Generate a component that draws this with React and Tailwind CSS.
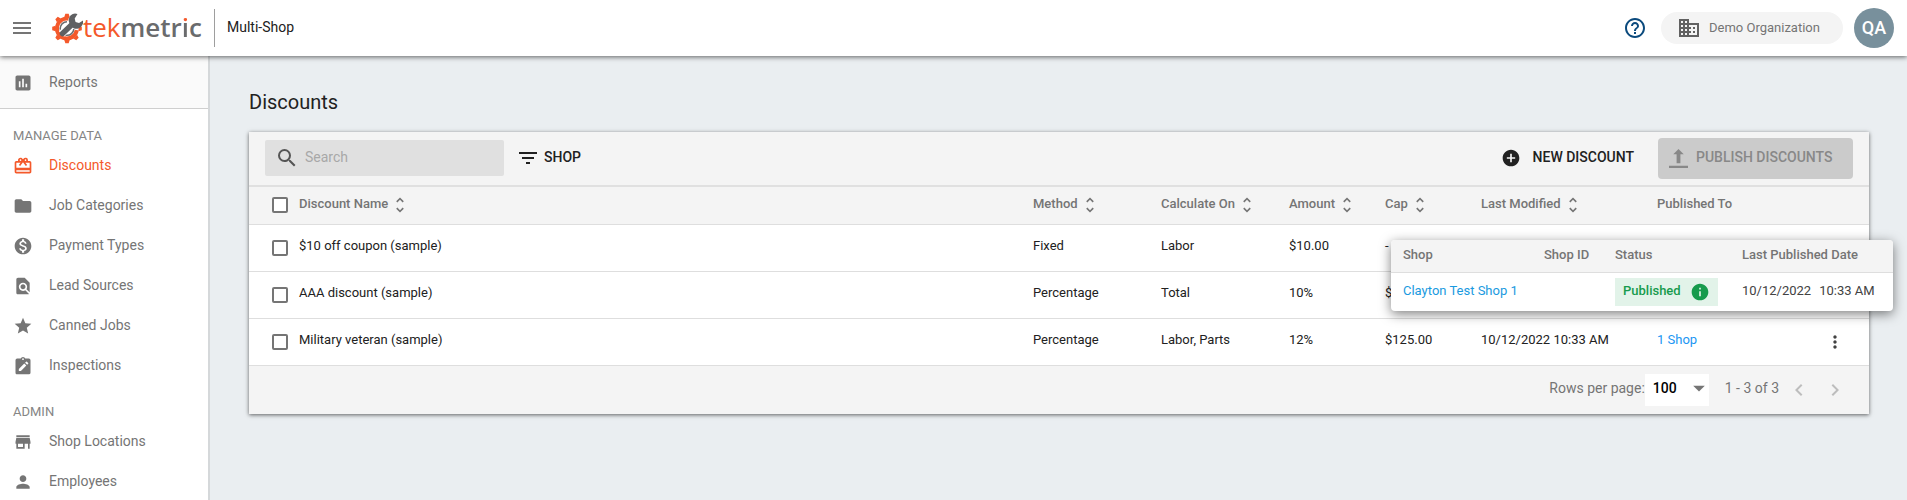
import React, { useState } from 'react';
import {
  MdMenu, MdHelpOutline, MdBusiness, MdAssessment, MdFolder, MdMonetizationOn, MdFindInPage, MdStar,
  MdStore, MdPerson, MdSearch, MdFilterList, MdAddCircle, MdInfo, MdMoreVert, MdChevronLeft,
  MdChevronRight, MdUnfoldMore, MdArrowDropDown, MdOutlineCardGiftcard,
} from 'react-icons/md';

const InspectionIcon = ({ className }) => (
  <svg viewBox="0 0 24 24" fill="currentColor" className={className}>
    <path
      fillRule="evenodd"
      d="M19 3h-4.2a3 3 0 0 0-5.6 0H5a2 2 0 0 0-2 2v15c0 1.100.9 2 2 2h14a2 2 0 0 0 2-2V5a2 2 0 0 0-2-2zm-7-.2a1 1 0 1 1 0 2 1 1 0 0 1 0-2zM7 18v-2.500l6.500-6.500 2.500 2.500L9.500 18zm10-7.500L14.500 8l1.200-1.200a.7.7 0 0 1 1 0l1.500 1.500a.7.7 0 0 1 0 1z"
    />
  </svg>
);

const UploadIcon = ({ className }) => (
  <svg viewBox="0 0 20 20" fill="currentColor" className={className}>
    <path d="M10 0l5.500 5.500H12V15H8V5.500H4.500zM0 17.500h20V20H0z" />
  </svg>
);

const LogoMark = () => (
  <svg viewBox="0 0 31 31" className="h-[31px] w-[31px]">
    <g fill="#f4592b">
      {[90, 135, 180, 225, 270, 315, 0].map((angle) => (
        <path key={angle} d="M12.300 4l1-3.300h3.400l1 3.300z" transform={`rotate(${angle} 15 15.500)`} />
      ))}
    </g>
    <path d="M17.500 5.800A10 10 0 1 0 24.800 17.200" fill="none" stroke="#f4592b" strokeWidth="4" />
    <path d="M15 8.700A6.800 6.800 0 1 0 21.800 16" fill="none" stroke="#6a6b6d" strokeWidth="1.500" />
    <path d="M9.500 21L21 10" stroke="#fff" strokeWidth="7.500" />
    <circle cx="23" cy="8.500" r="7" fill="#fff" />
    <path d="M10.500 20.500L21 10.500" stroke="#5f6062" strokeWidth="5.500" strokeLinecap="round" />
    <path
      d="M25.500 1a6.500 6.500 0 0 0-8.500 8l1.500 4 3.500 2.500a7 7 0 0 0 9-8l-4 2.500-3.500-1-.8-3.500z"
      fill="#5f6062"
    />
  </svg>
);

const manageItems = [
  { label: 'Discounts', Icon: MdOutlineCardGiftcard, active: true },
  { label: 'Job Categories', Icon: MdFolder },
  { label: 'Payment Types', Icon: MdMonetizationOn },
  { label: 'Lead Sources', Icon: MdFindInPage },
  { label: 'Canned Jobs', Icon: MdStar },
  { label: 'Inspections', Icon: InspectionIcon },
];

const adminItems = [
  { label: 'Shop Locations', Icon: MdStore },
  { label: 'Employees', Icon: MdPerson },
];

const discounts = [
  { id: 1, name: '$10 off coupon (sample)', method: 'Fixed', calculateOn: 'Labor', amount: '$10.00', cap: '-' },
  { id: 2, name: 'AAA discount (sample)', method: 'Percentage', calculateOn: 'Total', amount: '10%', cap: '$' },
  { id: 3, name: 'Military veteran (sample)', method: 'Percentage', calculateOn: 'Labor, Parts', amount: '12%', cap: '$125.00', modified: '10/12/2022 10:33 AM', shops: '1 Shop' },
];

const checkboxClass = 'block h-4 w-4 appearance-none rounded-xs border-2 border-[#757575] bg-white checked:bg-[#757575]';

const NavItem = ({ label, Icon, active }) => (
  <a href="#" className={`flex h-10 items-center gap-4 pl-[13px] ${active ? 'text-[#f4592b]' : 'text-[#757575]'}`}>
    <Icon className="h-5 w-5" />
    <span className="pb-0.5 text-sm">{label}</span>
  </a>
);

const SortHeader = ({ children }) => (
  <th className="p-0 text-left font-medium">
    <button className="flex items-center gap-0.5 font-medium">
      <span className="pb-1">{children}</span>
      <MdUnfoldMore className="h-5 w-5" />
    </button>
  </th>
);

const Cell = ({ children }) => <td className="p-0 pb-1">{children}</td>;

const PublishedPopup = () => (
  <div className="absolute top-[108px] -right-6 w-[502px] overflow-hidden rounded bg-white shadow-[0_3px_12px_rgba(0,0,0,0.5)]">
    <table className="w-full table-fixed text-left text-[13px]">
      <colgroup>
        <col className="w-[153px]" />
        <col className="w-[71px]" />
        <col className="w-[127px]" />
        <col />
      </colgroup>
      <thead>
        <tr className="h-8 border-b border-[#dedede] bg-[#f4f4f4] text-[#757575]">
          <th className="p-0 pb-0.5 pl-3 font-medium">Shop</th>
          <th className="p-0 pb-0.5 font-medium">Shop ID</th>
          <th className="p-0 pb-0.5 font-medium">Status</th>
          <th className="p-0 pb-0.5 font-medium">Last Published Date</th>
        </tr>
      </thead>
      <tbody>
        <tr className="h-[39px] text-[#424242]">
          <td className="p-0 pb-0.5 pl-3"><a href="#" className="text-[#1a9ae0]">Clayton Test Shop 1</a></td>
          <td></td>
          <td className="p-0">
            <span className="flex h-7 w-[103px] items-center justify-between bg-[#e2f3e9] px-2 font-medium text-[#179b4d]">
              <span className="pb-0.5">Published</span>
              <MdInfo className="h-5 w-5" />
            </span>
          </td>
          <td className="p-0 pb-0.5"><span className="mr-2">10/12/2022</span>10:33 AM</td>
        </tr>
      </tbody>
    </table>
  </div>
);

const App = () => {
  const [search, setSearch] = useState('');

  return (
    <div className="flex h-screen flex-col overflow-hidden bg-[#eaeef1] font-[Roboto,sans-serif] text-[#212121]">
      <header className="relative z-10 flex h-14 shrink-0 items-center bg-white pr-[13px] pl-[10px] shadow-[0_1px_5px_rgba(0,0,0,0.6)]">
        <button aria-label="Menu" className="text-[#757575]"><MdMenu className="h-6 w-6" /></button>
        <a href="#" className="ml-[18px] flex items-center">
          <LogoMark />
          <span className="pb-0.5 text-[26px] leading-8 font-[Open_Sans,sans-serif] text-[#f4592b]">
            tek
            <span className="font-semibold text-[#6a6b6d]">
              metr
              <span className="bg-linear-to-b from-[#f4592b] from-36% to-[#6a6b6d] to-36% bg-clip-text text-transparent">i</span>
              c
            </span>
          </span>
        </a>
        <div className="ml-3 flex h-[38px] items-center border-l border-[#9e9e9e] pb-0.5 pl-3 text-sm">Multi-Shop</div>
        <div className="ml-auto flex items-center">
          <button aria-label="Help" className="text-[#0b4a7d]"><MdHelpOutline className="h-6 w-6" /></button>
          <button className="ml-[14px] flex h-8 w-[182px] items-center gap-2 rounded-full bg-[#f4f4f4] pl-4 text-[13px] text-[#757575]">
            <MdBusiness className="h-6 w-6 text-[#616161]" />
            Demo Organization
          </button>
          <button className="ml-[11px] h-10 w-10 rounded-full bg-[#78909c] text-lg font-medium text-white">QA</button>
        </div>
      </header>

      <div className="flex min-h-0 flex-1">
        <nav className="w-[210px] shrink-0 border-r-2 border-[#d5d8da] bg-white">
          <div className="border-b border-[#cfcfcf] bg-[#fafafa] pt-[7px] pb-[5px]">
            <NavItem label="Reports" Icon={MdAssessment} />
          </div>
          <h2 className="mt-[17px] pl-[13px] text-[13px] leading-5 text-[#858585]">MANAGE DATA</h2>
          {manageItems.map((item) => <NavItem key={item.label} {...item} />)}
          <h2 className="mt-4 pl-[13px] text-[13px] leading-5 text-[#858585]">ADMIN</h2>
          {adminItems.map((item) => <NavItem key={item.label} {...item} />)}
        </nav>

        <main className="min-w-0 flex-1 pt-8 pr-[38px] pl-[39px]">
          <h1 className="text-xl leading-7">Discounts</h1>
          <section className="relative mt-4 bg-[#f4f4f4] shadow-[0_1px_4px_rgba(0,0,0,0.6)]">
            <div className="flex h-[55px] items-center border-b-2 border-[#e0e0e0] px-4 pb-px">
              <label className="flex h-9 w-[239px] items-center gap-1.5 rounded-xs bg-[#e0e0e0] pl-[10px]">
                <MdSearch className="h-6 w-6 text-[#555]" />
                <input
                  aria-label="Search"
                  placeholder="Search"
                  value={search}
                  onChange={(e) => setSearch(e.target.value)}
                  className="w-40 bg-transparent pb-0.5 text-sm outline-none placeholder:text-[#a8a8a8]"
                />
              </label>
              <button className="ml-3 flex items-center gap-1 text-sm font-medium">
                <MdFilterList className="h-6 w-6" />
                <span className="pb-0.5">SHOP</span>
              </button>
              <button className="ml-auto flex items-center gap-3 text-sm font-medium">
                <MdAddCircle className="h-5 w-5" />
                <span className="pb-0.5">NEW DISCOUNT</span>
              </button>
              <button disabled className="ml-6 flex h-[41px] w-[195px] items-center gap-2 rounded bg-[#cbcbcb] pl-[11px] text-sm font-medium text-[#888]">
                <UploadIcon className="h-[19px] w-[19px]" />
                <span className="pb-0.5">PUBLISH DISCOUNTS</span>
              </button>
            </div>

            <table className="w-full table-fixed text-[13px]">
              <colgroup>
                <col className="w-[50px]" />
                <col />
                <col className="w-32" />
                <col className="w-32" />
                <col className="w-24" />
                <col className="w-24" />
                <col className="w-44" />
                <col className="w-[168px]" />
                <col className="w-11" />
              </colgroup>
              <thead>
                <tr className="h-[37px] border-b border-[#dedede] text-[#757575]">
                  <th className="p-0 pl-[23px]"><input type="checkbox" aria-label="Select all" className={checkboxClass} /></th>
                  <SortHeader>Discount Name</SortHeader>
                  <SortHeader>Method</SortHeader>
                  <SortHeader>Calculate On</SortHeader>
                  <SortHeader>Amount</SortHeader>
                  <SortHeader>Cap</SortHeader>
                  <SortHeader>Last Modified</SortHeader>
                  <th className="p-0 pb-1 text-left font-medium">Published To</th>
                  <th></th>
                </tr>
              </thead>
              <tbody>
                {discounts.map((discount) => (
                  <tr key={discount.id} className="h-[47px] border-b border-[#dedede] bg-white">
                    <td className="p-0 pl-[23px]">
                      <input type="checkbox" aria-label={discount.name} className={checkboxClass} />
                    </td>
                    <Cell>{discount.name}</Cell>
                    <Cell>{discount.method}</Cell>
                    <Cell>{discount.calculateOn}</Cell>
                    <Cell>{discount.amount}</Cell>
                    <Cell>{discount.cap}</Cell>
                    <Cell>{discount.modified}</Cell>
                    <Cell>{discount.shops && <a href="#" className="text-[#2196f3]">{discount.shops}</a>}</Cell>
                    <td className="p-0">
                      <button aria-label="More" className="block text-[#424242]"><MdMoreVert className="h-5 w-5" /></button>
                    </td>
                  </tr>
                ))}
              </tbody>
            </table>

            <footer className="flex h-12 items-center justify-end pr-[22px] text-sm text-[#757575]">
              <label htmlFor="rows" className="pb-1">Rows per page:</label>
              <div className="relative h-8 w-16">
                <select id="rows" className="h-full w-full appearance-none bg-white pb-1 pl-2 font-medium text-black">
                  <option>100</option>
                </select>
                <MdArrowDropDown className="pointer-events-none absolute top-0 -right-1 h-7 w-7" />
              </div>
              <span className="ml-4 pb-1">1 - 3 of 3</span>
              <button aria-label="Previous page" className="ml-2 text-[#bdbdbd]"><MdChevronLeft className="h-6 w-6" /></button>
              <button aria-label="Next page" className="ml-3 text-[#bdbdbd]"><MdChevronRight className="h-6 w-6" /></button>
            </footer>
            <PublishedPopup />
          </section>
        </main>
      </div>
    </div>
  );
};

export default App;
